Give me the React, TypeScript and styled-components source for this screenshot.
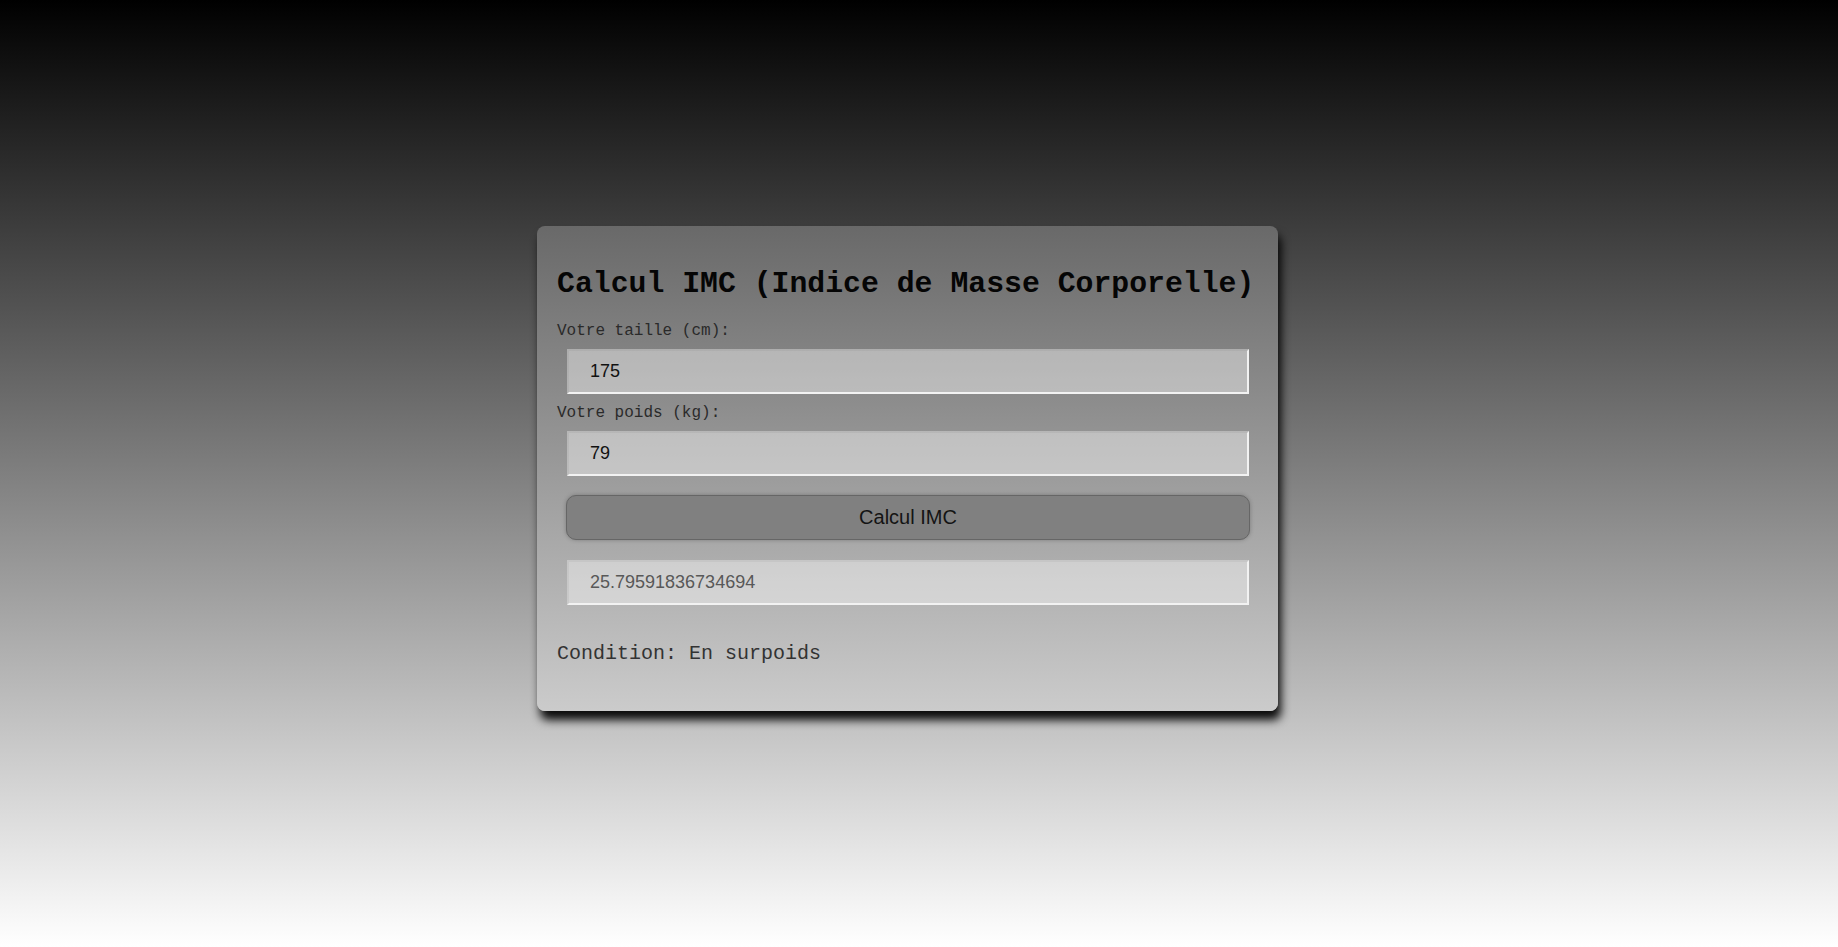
import React, { useState } from 'react'
import styled, { createGlobalStyle } from 'styled-components'

const GlobalStyle = createGlobalStyle`
  html, body {
    margin: 0;
    padding: 0;
  }

  body {
    background: linear-gradient(to bottom, #000000, #ffffff);
    font-family: 'Liberation Mono', 'Courier New', monospace;
    min-height: 100vh;
  }
`

const Page = styled.div`
  align-items: center;
  box-sizing: border-box;
  display: flex;
  justify-content: center;
  min-height: 100vh;
  padding: 0 23px 11px 0;
`

const Card = styled.div`
  background: linear-gradient(to bottom, #696969, #cbcbcb);
  border-radius: 8px;
  box-shadow: 3px 9px 10px rgba(0, 0, 0, 0.95);
  box-sizing: border-box;
  padding: 20px;
  width: 741px;
`

const Title = styled.h1`
  color: #050505;
  font-family: 'Liberation Mono', 'Courier New', monospace;
  font-size: 29.8px;
  font-weight: 700;
  line-height: 34px;
  margin: 21px 0 21px;
  white-space: nowrap;
`

const Label = styled.label`
  color: #2a2a2a;
  display: block;
  font-size: 16px;
  line-height: 18px;
`

const Field = styled.input<{ $muted?: boolean }>`
  background: rgba(255, 255, 255, 0.42);
  border-style: solid;
  border-width: 2px;
  border-color: rgba(0, 0, 0, 0.04) #f2f2f2 #f2f2f2 rgba(0, 0, 0, 0.04);
  box-sizing: border-box;
  color: ${p => (p.$muted ? '#585858' : '#111111')};
  display: block;
  font-family: 'Liberation Sans', Arial, sans-serif;
  font-size: 18px;
  height: 45px;
  margin: 9px 10px 10px;
  outline: none;
  padding: 0 20px 0 21px;
  width: calc(100% - 19px);
`

const Button = styled.button`
  background: #808080;
  border: 1px solid #666666;
  border-radius: 10px;
  box-shadow: 0 0 4px rgba(0, 0, 0, 0.25);
  box-sizing: border-box;
  color: #141414;
  cursor: pointer;
  display: block;
  font-family: 'Liberation Sans', Arial, sans-serif;
  font-size: 20px;
  height: 45px;
  margin: 19px 10px 20px 9px;
  width: calc(100% - 17px);
`

const Condition = styled.p`
  color: #333333;
  font-size: 20px;
  line-height: 23px;
  margin: 37px 0 26px;
`

const bmi = (height: number, weight: number) => weight / Math.pow(height / 100, 2)

const conditionFor = (value: number) => {
  if (value < 18.5) return 'Insuffisance pondérale'
  if (value < 25) return 'Poids normal'
  if (value < 30) return 'En surpoids'
  return 'Obésité'
}

export default function App() {
  const [height, setHeight] = useState('175')
  const [weight, setWeight] = useState('79')
  const [result, setResult] = useState<number>(bmi(175, 79))

  const compute = () => setResult(bmi(Number(height), Number(weight)))

  return (
    <>
      <GlobalStyle />
      <Page>
        <Card>
          <Title>Calcul IMC (Indice de Masse Corporelle)</Title>
          <Label htmlFor="taille">Votre taille (cm):</Label>
          <Field id="taille" value={height} onChange={e => setHeight(e.target.value)} />
          <Label htmlFor="poids">Votre poids (kg):</Label>
          <Field id="poids" value={weight} onChange={e => setWeight(e.target.value)} />
          <Button onClick={compute}>Calcul IMC</Button>
          <Field $muted readOnly value={String(result)} />
          <Condition>Condition: {conditionFor(result)}</Condition>
        </Card>
      </Page>
    </>
  )
}
